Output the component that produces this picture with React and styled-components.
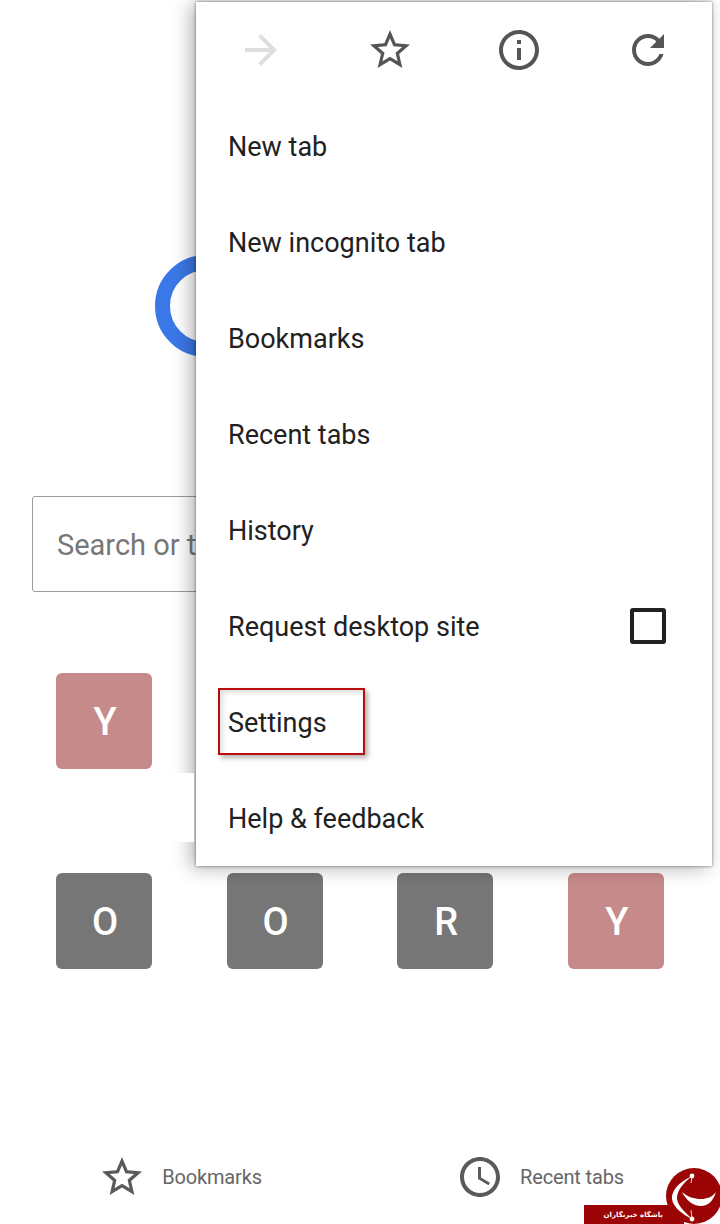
import React from "react"
import styled, { createGlobalStyle } from "styled-components"

const GlobalStyle = createGlobalStyle`
  html, body {
    margin: 0;
    padding: 0;
    background: #fff;
  }
  body {
    font-family: Roboto, "Liberation Sans", sans-serif;
  }
`

const menuItems = [
  "New tab",
  "New incognito tab",
  "Bookmarks",
  "Recent tabs",
  "History",
  "Request desktop site",
  "Settings",
  "Help & feedback",
]

const STAR =
  "M22 9.24l-7.19-.62L12 2 9.19 8.63 2 9.24l5.46 4.73L5.82 21 12 17.27 18.18 21l-1.63-7.03L22 9.24zM12 15.4l-3.76 2.27 1-4.28-3.32-2.88 4.38-.38L12 6.1l1.71 4.04 4.38.38-3.32 2.88 1 4.28L12 15.4z"
const ARROW = "M12 4l-1.41 1.41L16.17 11H4v2h12.17l-5.58 5.59L12 20l8-8z"
const INFO =
  "M11 7h2v2h-2zm0 4h2v6h-2zm1-9C6.48 2 2 6.48 2 12s4.48 10 10 10 10-4.48 10-10S17.52 2 12 2zm0 18c-4.41 0-8-3.59-8-8s3.59-8 8-8 8 3.59 8 8-3.59 8-8 8z"
const REFRESH =
  "M17.65 6.35C16.2 4.9 14.21 4 12 4c-4.42 0-7.99 3.58-7.99 8s3.57 8 7.99 8c3.73 0 6.84-2.55 7.73-6h-2.08c-.82 2.33-3.04 4-5.65 4-3.31 0-6-2.69-6-6s2.69-6 6-6c1.66 0 3.14.69 4.22 1.78L13 11h7V4l-2.35 2.35z"
const CLOCK =
  "M11.99 2C6.47 2 2 6.48 2 12s4.47 10 9.99 10C17.52 22 22 17.52 22 12S17.52 2 11.99 2zM12 20c-4.42 0-8-3.58-8-8s3.58-8 8-8 8 3.58 8 8-3.58 8-8 8zm.5-13H11v6l5.25 3.15.75-1.23-4.5-2.67z"

const Icon = ({ d, size, color }) => (
  <svg width={size} height={size} viewBox="0 0 24 24" fill={color} aria-hidden="true">
    <path d={d} />
  </svg>
)

const App = () => {
  return (
    <Page>
      <GlobalStyle />
      <LogoMark width="102" height="102" viewBox="0 0 102 102" aria-hidden="true">
        <circle cx="51" cy="51" r="43.5" fill="none" stroke="#3b78e7" strokeWidth="15" />
      </LogoMark>

      <SearchBox>Search or t</SearchBox>

      <TileGrid>
        <Tile $pink>Y</Tile>
        <TileRowBreak />
        <Tile>O</Tile>
        <Tile>O</Tile>
        <Tile>R</Tile>
        <Tile $pink>Y</Tile>
      </TileGrid>

      <BottomBar>
        <BottomLink>
          <Icon d={STAR} size={48} color="#5a5a5a" />
          <span>Bookmarks</span>
        </BottomLink>
        <BottomLink>
          <Icon d={CLOCK} size={48} color="#5a5a5a" />
          <span>Recent tabs</span>
        </BottomLink>
      </BottomBar>

      <Menu>
        <ShadowGap />
        <MenuToolbar>
          <Icon d={ARROW} size={48} color="#dedede" />
          <Icon d={STAR} size={48} color="#555" />
          <Icon d={INFO} size={48} color="#555" />
          <Icon d={REFRESH} size={48} color="#555" />
        </MenuToolbar>
        {menuItems.map((item) => (
          <MenuItem key={item}>
            {item}
            {item === "Request desktop site" && <Checkbox />}
            {item === "Settings" && <Highlight />}
          </MenuItem>
        ))}
      </Menu>

      <Watermark>
        <WatermarkBar>باشگاه خبرنگاران</WatermarkBar>
        <WatermarkLogo width="56" height="56" viewBox="0 0 56 56" aria-hidden="true">
          <circle cx="28" cy="28" r="28" fill="#9c0505" />
          <path d="M26 8C13 14 5 23 6 31c1 8 10 15 20 20C18 43 11 37 11 30 11 23 17 15 26 8z" fill="#fff" />
          <path d="M50 24c-4 5-9 7-15 7-7 0-13-2-19-7 4 8 11 14 19 14 7 0 12-5 15-14z" fill="#fff" />
          <path d="M26 8l-1 7M26 51l-1-9" stroke="#fff" strokeWidth="0.8" fill="none" />
          <circle cx="26" cy="8" r="2.4" fill="#fff" />
          <circle cx="26" cy="51" r="2.4" fill="#fff" />
        </WatermarkLogo>
      </Watermark>
    </Page>
  )
}

const Page = styled.div`
  position: relative;
  width: 720px;
  height: 1224px;
  overflow: hidden;
  padding-top: 255px;
  box-sizing: border-box;
  background: #fff;
`

const LogoMark = styled.svg`
  display: block;
  margin-left: 155px;
`

const SearchBox = styled.div`
  box-sizing: border-box;
  width: 656px;
  height: 96px;
  margin: 139px 0 0 32px;
  padding: 2px 0 0 24px;
  display: flex;
  align-items: center;
  border: 1px solid #9c9c9c;
  border-radius: 3px;
  font-size: 29px;
  color: #777;
`

const TileGrid = styled.div`
  display: grid;
  grid-template-columns: repeat(4, 96px);
  justify-content: space-between;
  row-gap: 104px;
  width: 608px;
  margin: 81px 0 0 56px;
`

const TileRowBreak = styled.div`
  grid-column: 2 / 5;
`

const Tile = styled.div`
  box-sizing: border-box;
  width: 96px;
  height: 96px;
  padding: 2px 0 0 2px;
  display: flex;
  align-items: center;
  justify-content: center;
  border-radius: 6px;
  background: ${(p) => (p.$pink ? "#c78a8a" : "#767676")};
  color: #fff;
  font-size: 38px;
  font-weight: 500;
`

const BottomBar = styled.div`
  display: grid;
  grid-template-columns: 1fr 1fr;
  margin-top: 184px;
`

const BottomLink = styled.div`
  display: flex;
  align-items: center;
  justify-content: center;
  gap: 16px;
  height: 48px;
  font-size: 20px;
  letter-spacing: -0.15px;
  color: #666;
`

const Menu = styled.div`
  position: absolute;
  top: 2px;
  left: 196px;
  width: 516px;
  background: #fff;
  box-shadow: 0 0 3px rgba(0, 0, 0, 0.5), -5px 2px 18px rgba(0, 0, 0, 0.3);
`

const ShadowGap = styled.div`
  position: absolute;
  top: 771px;
  left: -26px;
  width: 24px;
  height: 69px;
  background: #fff;
`

const MenuToolbar = styled.div`
  display: grid;
  grid-template-columns: repeat(4, 129px);
  justify-items: center;
  align-items: center;
  height: 96px;
`

const MenuItem = styled.div`
  position: relative;
  display: flex;
  align-items: center;
  justify-content: space-between;
  box-sizing: border-box;
  height: 96px;
  padding: 2px 46px 0 32px;
  font-size: 27px;
  color: #212121;
`

const Checkbox = styled.span`
  box-sizing: border-box;
  width: 36px;
  height: 36px;
  margin-top: -2px;
  border: 4px solid #212121;
  border-radius: 3px;
`

const Highlight = styled.span`
  position: absolute;
  top: 14px;
  left: 22px;
  width: 147px;
  height: 67px;
  box-sizing: border-box;
  border: 2px solid #b80d0d;
  box-shadow: 3px 3px 5px rgba(0, 0, 0, 0.3), inset 3px 3px 5px rgba(0, 0, 0, 0.12);
`

const Watermark = styled.div`
  position: absolute;
  right: 0;
  bottom: 0;
  width: 136px;
  height: 56px;
`

const WatermarkBar = styled.div`
  position: absolute;
  left: 0;
  bottom: 0;
  box-sizing: border-box;
  width: 100px;
  height: 19px;
  padding-right: 21px;
  display: flex;
  align-items: center;
  justify-content: flex-end;
  background: #9c0505;
  color: #fff;
  font-family: "DejaVu Sans", sans-serif;
  font-size: 7px;
  font-weight: 700;
`

const WatermarkLogo = styled.svg`
  position: absolute;
  right: -2px;
  bottom: 0;
  display: block;
`

export default App
